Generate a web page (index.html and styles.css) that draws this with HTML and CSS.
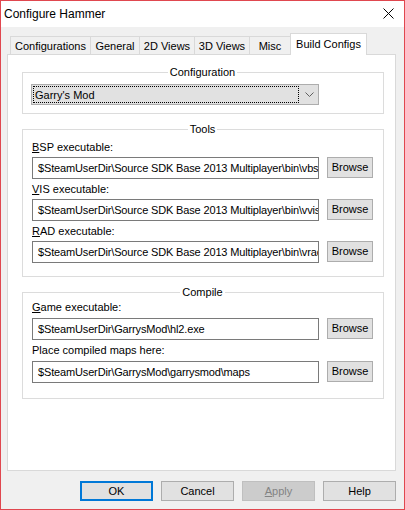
FILE: index.html
```html
<!DOCTYPE html>
<html>
<head>
<meta charset="utf-8">
<title>Configure Hammer</title>
<link rel="stylesheet" href="styles.css">
</head>
<body>
<div class="window">
  <div class="titlebar">
    <span class="title">Configure Hammer</span>
    <svg class="close" width="11" height="11" viewBox="0 0 11 11"><path d="M0.5 0.5 L10.5 10.5 M10.5 0.5 L0.5 10.5" stroke="#000" stroke-width="1" fill="none"/></svg>
  </div>
  <div class="content">
    <div class="tabs">
      <div class="tab w-conf">Configurations</div>
      <div class="tab w-gen">General</div>
      <div class="tab w-2d">2D Views</div>
      <div class="tab w-3d">3D Views</div>
      <div class="tab w-misc">Misc</div>
      <div class="tab tab-active w-build">Build Configs</div>
    </div>
    <div class="panel">
      <div class="group group-config">
        <div class="group-title">Configuration</div>
        <div class="select">
          <div class="select-value">Garry's Mod</div>
          <div class="select-arrow"><svg width="9" height="5" viewBox="0 0 9 5"><path d="M0.5 0.5 L4.5 4.5 L8.5 0.5" stroke="#606060" stroke-width="1" fill="none"/></svg></div>
        </div>
      </div>
      <div class="group group-tools">
        <div class="group-title">Tools</div>
        <div class="label"><u>B</u>SP executable:</div>
        <div class="field-row">
          <div class="textbox"><span class="tb-text">$SteamUserDir\Source SDK Base 2013 Multiplayer\bin\vbsp</span></div>
          <div class="btn btn-browse">Browse</div>
        </div>
        <div class="label"><u>V</u>IS executable:</div>
        <div class="field-row">
          <div class="textbox"><span class="tb-text">$SteamUserDir\Source SDK Base 2013 Multiplayer\bin\vvis</span></div>
          <div class="btn btn-browse">Browse</div>
        </div>
        <div class="label"><u>R</u>AD executable:</div>
        <div class="field-row">
          <div class="textbox"><span class="tb-text">$SteamUserDir\Source SDK Base 2013 Multiplayer\bin\vrad</span></div>
          <div class="btn btn-browse">Browse</div>
        </div>
      </div>
      <div class="group group-compile">
        <div class="group-title">Compile</div>
        <div class="label"><u>G</u>ame executable:</div>
        <div class="field-row">
          <div class="textbox"><span class="tb-text">$SteamUserDir\GarrysMod\hl2.exe</span></div>
          <div class="btn btn-browse">Browse</div>
        </div>
        <div class="label">Place compiled maps here:</div>
        <div class="field-row">
          <div class="textbox"><span class="tb-text">$SteamUserDir\GarrysMod\garrysmod\maps</span></div>
          <div class="btn btn-browse">Browse</div>
        </div>
      </div>
    </div>
    <div class="footer">
      <div class="btn btn-dlg btn-default">OK</div>
      <div class="btn btn-dlg">Cancel</div>
      <div class="btn btn-dlg btn-disabled"><u>A</u>pply</div>
      <div class="btn btn-dlg">Help</div>
    </div>
  </div>
</div>
</body>
</html>
```
FILE: styles.css
```css
* { box-sizing: border-box; }
html, body { margin: 0; padding: 0; }
body {
  font-family: "Liberation Sans", Arial, sans-serif;
  font-size: 11px;
  color: #000;
  background: #f0f0f0;
}
.window {
  width: 405px;
  height: 510px;
  border: 1px solid #e0474f;
  background: #f0f0f0;
  display: flex;
  flex-direction: column;
}
.titlebar {
  height: 26px;
  background: #fff;
  display: flex;
  align-items: center;
  padding-left: 3px;
  padding-right: 10px;
  padding-bottom: 1px;
}
.title {
  font-size: 12px;
  flex: 1;
}
.close { display: block; }
.content {
  flex: 1;
  padding: 6px 7px 0 6px;
  display: flex;
  flex-direction: column;
}
.tabs {
  height: 21px;
  display: flex;
  align-items: flex-end;
  padding-left: 3px;
}
.tab {
  height: 18px;
  border: 1px solid #d9d9d9;
  border-bottom: none;
  background: #f0f0f0;
  text-align: center;
  line-height: 16px;
  padding-top: 1px;
  margin-left: -1px;
  white-space: nowrap;
}
.tab:first-child { margin-left: 0; }
.w-conf { width: 81px; }
.w-gen { width: 50px; }
.w-2d { width: 56px; }
.w-3d { width: 56px; }
.w-misc { width: 42px; }
.w-build { width: 77px; }
.tab-active {
  height: 22px;
  margin-bottom: -1px;
  background: #fff;
  position: relative;
  z-index: 1;
  padding-top: 2px;
}
.panel {
  height: 417px;
  width: 389px;
  background: #fff;
  border: 1px solid #d9d9d9;
  padding: 17px 11px 0 14px;
}
.group {
  border: 1px solid #dcdcdc;
  padding: 0 10px 0 9px;
}
.group-title {
  display: table;
  margin: -7px auto 0;
  line-height: 13px;
  background: #fff;
  padding: 0 2px;
}
.group-config { padding-bottom: 8px; }
.group-tools { margin-top: 15px; padding-bottom: 13px; }
.group-compile { margin-top: 15px; padding-bottom: 15px; }
.select {
  margin-top: 5px;
  margin-left: -1px;
  width: 288px;
  height: 21px;
  background: #e1e1e1;
  border: 1px solid #adadad;
  padding: 1px 0 1px 1px;
  display: flex;
}
.select-value {
  width: 266px;
  border: 1px dotted #000;
  line-height: 16px;
  padding-left: 1px;
}
.select-arrow {
  flex: 1;
  display: flex;
  align-items: center;
  justify-content: center;
  padding-left: 2px;
}
.select-arrow svg { display: block; }
.label {
  line-height: 13px;
  margin-top: 4px;
}
.group-tools .group-title + .label { margin-top: 5px; }
.group-compile .group-title + .label { margin-top: 2px; }
.field-row {
  display: flex;
  gap: 8px;
  margin-top: 3px;
  align-items: flex-start;
}
.group-compile .field-row { margin-top: 4px; }
.textbox {
  width: 287px;
  height: 22px;
  border: 1px solid #7a7a7a;
  background: #fff;
  padding: 1px 2px 0 5px;
  line-height: 18px;
  white-space: nowrap;
  overflow: hidden;
}
.tb-text {
  letter-spacing: -0.15px;
}
.btn {
  background: #e1e1e1;
  border: 1px solid #adadad;
  text-align: center;
  white-space: nowrap;
}
.btn-browse {
  width: 46px;
  height: 21px;
  line-height: 19px;
}
.footer {
  margin-top: 10px;
  display: flex;
  justify-content: flex-end;
  gap: 8px;
  padding-right: 1px;
}
.btn-dlg {
  width: 73px;
  height: 20px;
  line-height: 18px;
}
.btn-default {
  border: 2px solid #0078d7;
  line-height: 16px;
}
.btn-disabled {
  background: #cccccc;
  border-color: #bfbfbf;
  color: #838383;
}
```
